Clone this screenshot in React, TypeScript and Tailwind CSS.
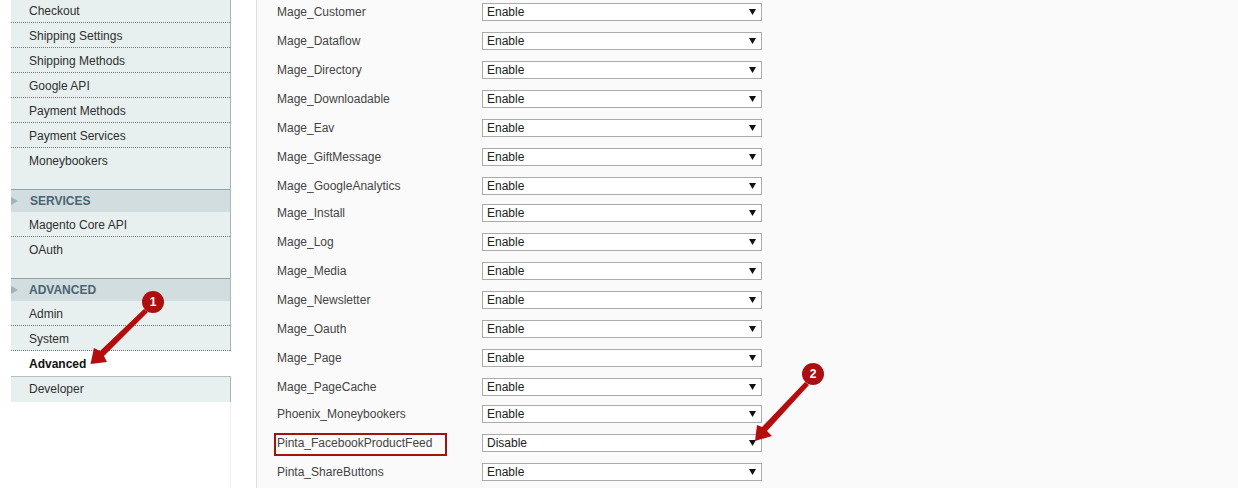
import React from 'react';

const rows = [
  { name: 'Mage_Customer', value: 'Enable', h: 'h-[29px]' },
  { name: 'Mage_Dataflow', value: 'Enable', h: 'h-[29px]' },
  { name: 'Mage_Directory', value: 'Enable', h: 'h-[29px]' },
  { name: 'Mage_Downloadable', value: 'Enable', h: 'h-[29px]' },
  { name: 'Mage_Eav', value: 'Enable', h: 'h-[29px]' },
  { name: 'Mage_GiftMessage', value: 'Enable', h: 'h-[29px]' },
  { name: 'Mage_GoogleAnalytics', value: 'Enable', h: 'h-[27px]' },
  { name: 'Mage_Install', value: 'Enable', h: 'h-[29px]' },
  { name: 'Mage_Log', value: 'Enable', h: 'h-[29px]' },
  { name: 'Mage_Media', value: 'Enable', h: 'h-[29px]' },
  { name: 'Mage_Newsletter', value: 'Enable', h: 'h-[29px]' },
  { name: 'Mage_Oauth', value: 'Enable', h: 'h-[29px]' },
  { name: 'Mage_Page', value: 'Enable', h: 'h-[29px]' },
  { name: 'Mage_PageCache', value: 'Enable', h: 'h-[27px]' },
  { name: 'Phoenix_Moneybookers', value: 'Enable', h: 'h-[29px]' },
  { name: 'Pinta_FacebookProductFeed', value: 'Disable', h: 'h-[29px]' },
  { name: 'Pinta_ShareButtons', value: 'Enable', h: 'h-[29px]' },
];

const NavItem: React.FC<{ label: string; last?: boolean; h?: string }> = ({ label, last, h = 'h-[25px] pt-[2px]' }) => (
  <div className={`${h} flex items-center pl-[18px] text-[12px] text-[#2f2f2f] ${last ? '' : 'border-b border-dotted border-[#777]'}`}>
    {label}
  </div>
);

const SectionHeader: React.FC<{ label: string; pad: string }> = ({ label, pad }) => (
  <div className={`h-[23px] flex items-center bg-[#d1dddf] border-t border-[#8fa3a8] ${pad} text-[12px] font-bold text-[#4a6472] relative`}>
    <svg className="absolute left-0 top-[7px]" width="8" height="8" viewBox="0 0 8 8">
      <path d="M0 0 L7 4 L0 8 Z" fill="#9fb3b9" />
    </svg>
    {label}
  </div>
);

const Sidebar = () => (
  <div className="w-[220px] ml-[11px] shrink-0 flex flex-col">
    <div className="bg-[#e7efef] border-r border-[#a5b5b9]">
      <NavItem label="Checkout" h="h-[23px]" />
      <NavItem label="Shipping Settings" />
      <NavItem label="Shipping Methods" />
      <NavItem label="Google API" />
      <NavItem label="Payment Methods" />
      <NavItem label="Payment Services" />
      <NavItem label="Moneybookers" last h="h-[41px] items-start pt-[4px]" />
    </div>
    <div className="bg-[#e7efef] border-r border-[#a5b5b9]">
      <SectionHeader label="SERVICES" pad="pl-[19px]" />
      <NavItem label="Magento Core API" />
      <NavItem label="OAuth" last h="h-[41px] items-start pt-[4px]" />
    </div>
    <div className="bg-[#e7efef] border-r border-[#a5b5b9]">
      <SectionHeader label="ADVANCED" pad="pl-[18px]" />
      <NavItem label="Admin" />
      <NavItem label="System" />
    </div>
    <div className="h-[26px] flex items-center pl-[18px] text-[12px] font-bold text-[#111] bg-white border-b border-[#b5bfc1]">
      Advanced
    </div>
    <div className="bg-[#e7efef] border-r border-[#a5b5b9]">
      <NavItem label="Developer" last h="h-[25px] pb-[2px]" />
    </div>
    <div className="flex-1 bg-white border-r border-[#eeeeee]" />
  </div>
);

const SelectBox: React.FC<{ value: string }> = ({ value }) => (
  <div className="w-[280px] h-[18px] flex items-center justify-between bg-white border border-[#ababab] pl-[4px] pr-[5px] text-[12px] text-[#222]">
    {value}
    <svg width="7" height="6" viewBox="0 0 7 6">
      <path d="M0 0 H7 L3.5 6 Z" fill="#111" />
    </svg>
  </div>
);

const Annotation: React.FC<{ n: number; className: string }> = ({ n, className }) => (
  <div className={`absolute w-[22px] h-[22px] rounded-full bg-[#ac0f0f] flex items-center justify-center text-[12px] font-bold text-white ${className}`}>
    {n}
  </div>
);

export default function App() {
  return (
    <div className="relative w-[1238px] h-[488px] overflow-hidden bg-white flex font-['Liberation_Sans',Arial,sans-serif]">
      <Sidebar />
      <div className="ml-[25px] flex-1 bg-[#fafafa] border-l border-[#dddddd] pl-[20px] pt-[3px]">
        {rows.map((row) => (
          <div key={row.name} className={`${row.h} flex items-start`}>
            <div className="w-[205px] h-[18px] flex items-center text-[12px] text-[#444]">{row.name}</div>
            <SelectBox value={row.value} />
          </div>
        ))}
      </div>

      {/* red box round the feed module */}
      <div className="absolute left-[274px] top-[433px] w-[173px] h-[23px] border-2 border-[#a01313]" />

      <svg className="absolute left-0 top-0 pointer-events-none" width="1238" height="488" viewBox="0 0 1238 488">
        <path d="M144 309 L100 351 L94 348 L90.5 364 L107 362 L104 356 L148 312 Z" fill="#b50d0d" />
        <path d="M805 382 L762 427 L757 425 L755 441 L772 436 L767 431 L809 385 Z" fill="#b50d0d" />
      </svg>
      <Annotation n={1} className="left-[142px] top-[291px]" />
      <Annotation n={2} className="left-[802px] top-[363px]" />
    </div>
  );
}
